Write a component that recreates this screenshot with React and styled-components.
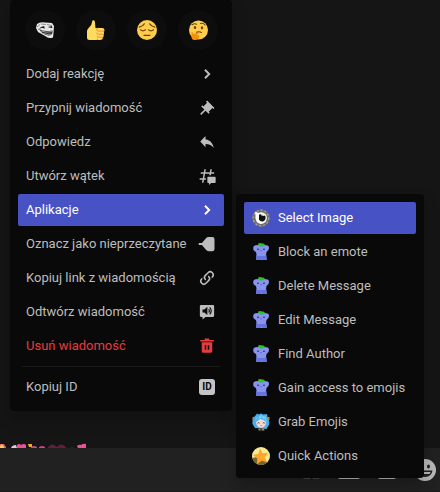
import React from "react";
import styled, { createGlobalStyle, css } from "styled-components";

const GlobalStyle = createGlobalStyle`
  *, *::before, *::after { box-sizing: border-box; }
  body {
    margin: 0;
    background: #151515;
    font-family: Roboto, "Noto Sans", sans-serif;
  }
`;

const Chat = styled.main`
  position: relative;
  display: flex;
  flex-direction: column;
  min-height: 100vh;
  overflow: hidden;
  background: #151515;
`;

const Messages = styled.section`
  flex: 1;
  display: flex;
  align-items: flex-end;
`;

const EmojiStrip = styled.svg`
  display: block;
  width: 88px;
  height: 5px;
`;

const Composer = styled.footer`
  display: flex;
  align-items: center;
  justify-content: flex-end;
  gap: 18px;
  height: 44px;
  padding-right: 4px;
  background: #212121;
  border-bottom: 1px solid #1b1b1b;
`;

const ComposerButton = styled.button`
  display: flex;
  padding: 0;
  border: 0;
  background: none;
  color: #b9b9b9;
`;

const panel = css`
  position: absolute;
  background: #090909;
  border-radius: 4px;
  box-shadow: 0 8px 16px rgba(0, 0, 0, 0.24);
`;

const ContextMenu = styled.nav`
  ${panel}
  top: 0;
  left: 10px;
  width: 222px;
  padding: 8px;
`;

const Submenu = styled.nav`
  ${panel}
  top: 194px;
  left: 236px;
  width: 188px;
  padding: 8px 8px 6px;
`;

const Reactions = styled.div`
  display: flex;
  justify-content: space-between;
  padding: 2px 6px 8px 7px;
`;

const ReactionButton = styled.button`
  display: grid;
  place-items: center;
  width: 40px;
  height: 40px;
  padding: 0;
  border: 0;
  border-radius: 50%;
  background: #0d0d0d;
`;

const ItemList = styled.div`
  display: flex;
  flex-direction: column;
  gap: 2px;
`;

const MenuItem = styled.button`
  display: flex;
  align-items: center;
  gap: 8px;
  height: 32px;
  padding: 0 8px;
  border: 0;
  border-radius: 2px;
  font: inherit;
  font-size: 13px;
  line-height: 18px;
  text-align: left;
  white-space: nowrap;
  color: ${(p) => (p.$active ? "#ffffff" : p.$danger ? "#e63c40" : "#bdbdbd")};
  background: ${(p) => (p.$active ? "#4752c4" : "transparent")};
`;

const ActionItem = styled(MenuItem)`
  justify-content: space-between;
`;

const Separator = styled.hr`
  height: 1px;
  margin: 4px;
  border: 0;
  background: #1b1b1b;
`;

const IconSvg = styled.svg`
  display: block;
  flex: none;
`;

const IdBadge = styled.span`
  display: grid;
  place-items: center;
  width: 16px;
  height: 16px;
  margin-right: 1px;
  border-radius: 3px;
  background: #c4c4c4;
  color: #090909;
  font: bold 10px/16px Roboto, sans-serif;
`;

const Icon = ({ size = 18, box = 24, children }) => (
  <IconSvg width={size} height={size} viewBox={`0 0 ${box} ${box}`} fill="currentColor" aria-hidden="true">
    {children}
  </IconSvg>
);

const Chevron = () => (
  <Icon>
    <path d="M9.3 6.4 14.9 12l-5.6 5.6" fill="none" stroke="currentColor" strokeWidth="2.6" />
  </Icon>
);

const Pin = () => (
  <Icon>
    <path d="M22 12L12.101 2.101L10.686 3.514L12.101 4.929L7.151 9.878L5.736 8.465L4.322 9.88L8.565 14.122L2.908 19.778L4.322 21.192L9.979 15.536L14.222 19.778L15.636 18.364L14.222 16.95L19.171 12L20.586 13.414L22 12Z" />
  </Icon>
);

const Reply = () => (
  <Icon>
    <path d="M10 8.267V4L3 11.467L10 18.933V14.56C15 14.56 18.5 16.267 21 20C20 14.667 17 9.333 10 8.267Z" />
  </Icon>
);

const Thread = () => (
  <Icon>
    <path d="M5.3 21 6 17H2l.35-2h4l1.06-6h-4l.35-2h4l.7-4h2l-.7 4h6l.7-4h2l-.7 4h4l-.35 2h-4l-.36 2.04h-2L15.41 9h-6l-1.06 6h2.21v2H8l-.7 4Z" />
    <path d="M13.44 12.96c-.53 0-.96.43-.96.96v6.3c0 .53.43.96.96.96h.96c.13 0 .24.11.24.24v2.04c0 .21.25.32.4.18l2.45-2.21c.17-.16.4-.25.64-.25h4.43c.53 0 .96-.43.96-.96v-6.3c0-.53-.43-.96-.96-.96Z" />
  </Icon>
);

const MarkUnread = () => (
  <Icon>
    <path d="M1 10.800h4.300L10.600 4.200Q12 2.500 14.200 2.500H19Q22 2.500 22 5.500v13Q22 21.500 19 21.500H14.200Q12 21.500 10.600 19.800L5.300 13.200H1Z" />
  </Icon>
);

const Link = () => (
  <Icon>
    <path d="M10.59 13.41c.41.39.41 1.03 0 1.42-.39.39-1.03.39-1.42 0a5.003 5.003 0 0 1 0-7.07l3.54-3.54a5.003 5.003 0 0 1 7.07 0 5.003 5.003 0 0 1 0 7.07l-1.49 1.49c.01-.82-.12-1.64-.4-2.42l.47-.48a2.982 2.982 0 0 0 0-4.24 2.982 2.982 0 0 0-4.24 0l-3.53 3.53a2.982 2.982 0 0 0 0 4.24zm2.82-4.24c.39-.39 1.03-.39 1.42 0a5.003 5.003 0 0 1 0 7.07l-3.54 3.54a5.003 5.003 0 0 1-7.07 0 5.003 5.003 0 0 1 0-7.07l1.49-1.49c-.01.82.12 1.64.4 2.43l-.47.47a2.982 2.982 0 0 0 0 4.24 2.982 2.982 0 0 0 4.24 0l3.53-3.53a2.982 2.982 0 0 0 0-4.24.973.973 0 0 1 0-1.42z" />
  </Icon>
);

const Speak = () => (
  <Icon>
    <path d="M4 2.500h16a1.500 1.500 0 0 1 1.500 1.500v13a1.500 1.500 0 0 1-1.500 1.500H10L6 22v-3.500H4A1.500 1.500 0 0 1 2.500 17V4A1.500 1.500 0 0 1 4 2.500Z" />
    <path d="M6 8.500h2.500L12.500 5v11L8.500 12.800H6Z" fill="#090909" />
    <path d="M14.300 8.200q1.800 2.300 0 4.600M15.600 5.700q4 4.800 0 9.600" fill="none" stroke="#090909" strokeWidth="1.500" />
  </Icon>
);

const Trash = () => (
  <Icon>
    <path d="M15 4V2H9v2H3v2h18V4Z" />
    <path d="M5 7v12c0 1.100.9 2 2 2h10c1.100 0 2-.9 2-2V7ZM11 17H9v-6h2ZM15 17h-2v-6h2Z" />
  </Icon>
);

const Troll = () => (
  <Icon size={20} box={20}>
    <path d="M2 4Q5 1.500 10 2.500L17 3 19 6 18.500 13 18 17.500Q14 19 11 16.500L3 12 1 8Z" fill="#e8e8e8" />
    <path d="M2 7 5 4.500M3 9.500l4-2M6 4l5 .5M12 4.500l5 1" stroke="#777" strokeWidth=".8" fill="none" />
    <path d="M4.500 7.500 9 6 10 8.500ZM12.500 7l4.500-1 .3 2.200Z" fill="#222" />
    <path d="M4 9Q8 12 17.500 10.500 18 15.500 13.500 15.500 7 14.500 4 9Z" fill="#2c2c2c" />
    <path d="M6 11q5 2 11 .6M8 13.300q4 1.700 8 .9" stroke="#ccc" strokeWidth=".7" fill="none" />
  </Icon>
);

const Thumb = () => (
  <Icon size={20} box={20}>
    <path d="M6.500.5Q8.800-.5 9 2.500 9.200 5.500 9.500 8H16q2.500 0 2.500 2.200 0 1-.8 1.500.8 1.800-.2 3 .5 2-.7 2.800 0 2.500-3 2.500H3.500Q1 20 1 17.500V11q0-1.500 2-3.500Q6 5 6 2Z" fill="#ffdb5e" />
    <path d="M18 11h-5.500q-1.800 0-1.800-1.400T12.500 8M17.500 14.200h-5q-1.700 0-1.700-1.500M17.200 17.200h-4.500q-1.500 0-1.500-1.500M12.500 20q-1.500-.3-1.300-1.600" stroke="#e28a3b" strokeWidth="1" fill="none" />
  </Icon>
);

const Pensive = () => (
  <Icon size={20} box={20}>
    <circle cx="10" cy="10" r="10" fill="#ffcc4d" />
    <path d="M2.200 7.200Q5.500 6.300 7.300 3.800M17.800 7.200Q14.500 6.300 12.700 3.800M3.500 9.800q2.500 2 5 0M11.500 9.800q2.500 2 5 0M7 15.300h6" stroke="#664500" strokeWidth="1.200" strokeLinecap="round" fill="none" />
  </Icon>
);

const Thinking = () => (
  <Icon size={20} box={20}>
    <circle cx="10.500" cy="10" r="9.500" fill="#ffcc4d" />
    <path d="M4 4.800Q6.500 3 8.500 4.200M12.500 3.500q3-.8 4.500 1.500M8.500 12.300q2.500-1.300 5 .2" stroke="#664500" strokeWidth="1.100" strokeLinecap="round" fill="none" />
    <ellipse cx="7" cy="7.500" rx="1.200" ry="1.500" fill="#664500" />
    <ellipse cx="14" cy="7.800" rx="1.200" ry="1.500" fill="#664500" />
    <path d="M3.500 12Q4.800 11.500 5.300 14L10.500 12.500q1.500-.2 1 .8l-3 1.500 2.500.5q1.200 3.700-3.500 4.700-4 .3-4-3Z" fill="#f4900c" />
  </Icon>
);

const Eye = () => (
  <Icon box={18}>
    <circle cx="9" cy="9" r="9" fill="#707070" />
    <circle cx="9" cy="9" r="7.800" fill="none" stroke="#a5a5a5" strokeWidth="1.200" strokeDasharray="2 2" />
    <path d="M3 2.500 6.500 4Q10 2 14 5.500q2 4-.5 7.500-4.500 3.500-8 .5Q3 11 3.500 6.500Z" fill="#fff" />
    <path d="M7 5.500Q11 4.500 13.300 7q1 3-1.300 5-3.500 1.500-5-1.500Z" fill="#111" />
    <path d="M8.500 4h3.800v3L9.500 6.500Z" fill="#eee" />
  </Icon>
);

const Sprout = () => (
  <Icon box={18}>
    <path d="M3.500 2.300Q9 1.200 14.500 2.300 17 2.300 17 5q0 2.800-2.500 4L14 12l.8 5H4.200L4.500 12 4 9Q1 8 1.200 4.800 1.300 2.300 3.500 2.300Z" fill="#8793ed" />
    <path d="m4.300 12 1.700 1h6.500l1.800-1 .5 5H10.500L9.500 15.800l-1 1.200H4.200Z" fill="#6673e2" />
    <path d="M6 .8Q8-.5 10 .6q2-.4 2.800 1Q12 3.500 9.500 3.500 6.200 3.500 6 .8Z" fill="#2bc51e" />
    <circle cx="6" cy="6.300" r=".8" fill="#17193c" />
    <circle cx="12" cy="6.300" r=".8" fill="#17193c" />
    <path d="M8 7.500q1 .8 2 0" stroke="#5a66cc" strokeWidth=".8" fill="none" />
  </Icon>
);

const AnimeFace = () => (
  <Icon box={18}>
    <path d="M2 4 4 2 5 .5 7 1.500Q9-.5 11 1.500L15 1l.5 3Q18 7 17 12l-2.500 4L3 15 .5 11Q0 7 2 4Z" fill="#48aee8" />
    <path d="M4 9 8 6l3.500 1L14 9q.3 5-4.800 5.800Q4 14 4 9Z" fill="#f7d7ce" />
    <path d="M3 8 7 3 6.500 8 10 4l1 4 1-3 3 5-1-6-5-2-5 3Z" fill="#71cdf7" />
    <path d="M5.500 10.200q1-1.200 2 0M10.800 10.200q1-1.200 2 0" stroke="#564158" fill="none" />
    <path d="M8.300 12.300h1.800l-.9.900Z" fill="#b95563" />
    <path d="M.5 4h1.500v3H.5ZM16 4h1.500v3H16ZM6.500 15.500l2.500.5 3-.5.500 2H6.500Z" fill="#c9851b" />
    <path d="M8.300 16h1.500v2H8.300Z" fill="#282c50" />
  </Icon>
);

const StarBadge = () => (
  <Icon box={18}>
    <circle cx="9" cy="9" r="9" fill="#f8e994" />
    <path d="M.3 11 5 10l7 3 3.500 2.200Q11 19.500 5 17 1.300 15 .3 11Z" fill="#756529" />
    <path d="m8 1.500 2.500 4.700 5.700-.5-3.500 4.600 2.500 5.200-5.500-1.700-4.600 3.500.1-5.900L.8 8l5.600-1.300Z" fill="#ffa62b" />
  </Icon>
);

const Gift = () => (
  <Icon>
    <path d="M1 8h22v5H1ZM2 14h9v9H2ZM14 14h9v9h-9ZM6 3h5l1 5h1l1-5h5v5H6Z" />
  </Icon>
);

const GifCard = () => (
  <IconSvg width="22" height="18" viewBox="0 0 22 18" fill="currentColor" aria-hidden="true">
    <rect width="22" height="18" rx="2" />
  </IconSvg>
);

const Sticker = () => (
  <Icon box={18}>
    <rect width="18" height="18" rx="2" />
  </Icon>
);

const Grin = () => (
  <Icon size={22} box={22}>
    <circle cx="11" cy="11" r="11" />
    <ellipse cx="7.500" cy="7.200" rx="1.500" ry="2" fill="#212121" />
    <ellipse cx="14.500" cy="7.500" rx="1.500" ry="2" fill="#212121" />
    <path d="M3.500 11.500h15Q17.500 18 11 18T3.500 11.500Z" fill="#212121" />
    <path d="M5.500 13h11l-.8 2H6.300Z" />
  </Icon>
);

const reactions = [
  { label: "Troll", Art: Troll },
  { label: "Kciuk w górę", Art: Thumb },
  { label: "Zamyślony", Art: Pensive },
  { label: "Hmm", Art: Thinking },
];

const actions = [
  { label: "Dodaj reakcję", Art: Chevron },
  { label: "Przypnij wiadomość", Art: Pin },
  { label: "Odpowiedz", Art: Reply },
  { label: "Utwórz wątek", Art: Thread },
  { label: "Aplikacje", Art: Chevron, active: true },
  { label: "Oznacz jako nieprzeczytane", Art: MarkUnread },
  { label: "Kopiuj link z wiadomością", Art: Link },
  { label: "Odtwórz wiadomość", Art: Speak },
  { label: "Usuń wiadomość", Art: Trash, danger: true },
];

const apps = [
  { label: "Select Image", Art: Eye, active: true },
  { label: "Block an emote", Art: Sprout },
  { label: "Delete Message", Art: Sprout },
  { label: "Edit Message", Art: Sprout },
  { label: "Find Author", Art: Sprout },
  { label: "Gain access to emojis", Art: Sprout },
  { label: "Grab Emojis", Art: AnimeFace },
  { label: "Quick Actions", Art: StarBadge },
];

export default function App() {
  return (
    <Chat>
      <GlobalStyle />
      <Messages>
        <EmojiStrip viewBox="0 0 88 5" aria-hidden="true">
          <path d="M0 1h4l2 3v1H0Z" fill="#e65386" />
          <path d="m0 3 2-2 2 3v1H0Z" fill="#ffd23e" />
          <path d="M11 5q1-3 5-3l1 3Z" fill="#e9c5d0" />
          <path d="M17 2q2-2 4 0 3-2 5 0v3h-9ZM77 3q2-2 4-1 2-2 5-1v4h-8Z" fill="#ee4f93" />
          <path d="M28 1h4v3h-3Z" fill="#eeb020" />
          <path d="M31 4q3-2 6 0v1h-6ZM39 4q3-2 6 0v1h-6Z" fill="#cf4583" />
          <path d="M48 4q4-5 9 0 4-5 9 0v1H48Z" fill="#651c3b" />
          <path d="M71 4h2v1h-2Z" fill="#4e1b2d" />
        </EmojiStrip>
      </Messages>
      <Composer>
        <ComposerButton aria-label="Prezent"><Gift /></ComposerButton>
        <ComposerButton aria-label="GIF"><GifCard /></ComposerButton>
        <ComposerButton aria-label="Naklejka"><Sticker /></ComposerButton>
        <ComposerButton aria-label="Emoji"><Grin /></ComposerButton>
      </Composer>

      <ContextMenu aria-label="Wiadomość">
        <Reactions>
          {reactions.map(({ label, Art }) => (
            <ReactionButton key={label} aria-label={label}><Art /></ReactionButton>
          ))}
        </Reactions>
        <ItemList>
          {actions.map(({ label, Art, active, danger }) => (
            <ActionItem key={label} $active={active} $danger={danger}>
              {label}
              <Art />
            </ActionItem>
          ))}
        </ItemList>
        <Separator />
        <ItemList>
          <ActionItem aria-label="Kopiuj ID">
            Kopiuj ID
            <IdBadge>ID</IdBadge>
          </ActionItem>
        </ItemList>
      </ContextMenu>

      <Submenu aria-label="Aplikacje">
        <ItemList>
          {apps.map(({ label, Art, active }) => (
            <MenuItem key={label} $active={active}>
              <Art />
              {label}
            </MenuItem>
          ))}
        </ItemList>
      </Submenu>
    </Chat>
  );
}
